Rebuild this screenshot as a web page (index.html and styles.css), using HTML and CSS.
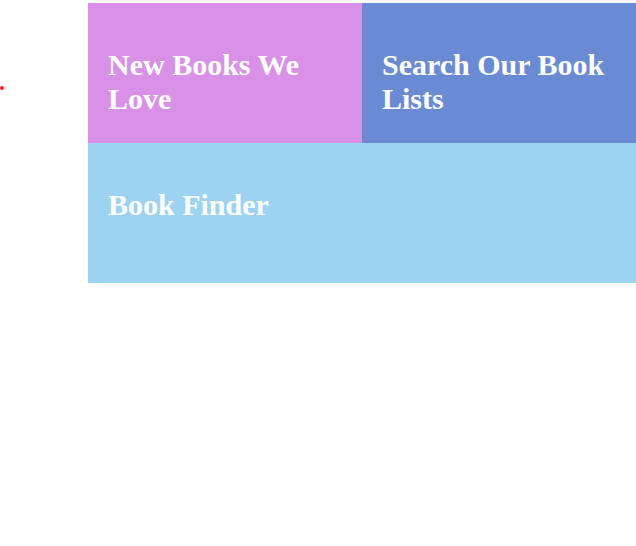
FILE: index.html
```html
<!DOCTYPE html>
<html>
<head>
<meta charset="utf-8">
<link rel="stylesheet" href="styles.css">
</head>
<body>
<div class="page">
  <span class="dot"></span>
  <div class="tiles">
    <a class="tile tile-pink" href="#"><h2>New Books We Love</h2></a>
    <a class="tile tile-blue" href="#"><h2>Search Our Book Lists</h2></a>
    <a class="tile tile-sky tile-wide" href="#"><h2>Book Finder</h2></a>
  </div>
</div>
</body>
</html>
```
FILE: styles.css
```css
html, body {
  margin: 0;
  padding: 0;
  background: #fff;
}
.page {
  position: relative;
  padding: 3px 0 0 88px;
}
.dot {
  position: absolute;
  left: 0;
  top: 86px;
  width: 4px;
  height: 4px;
  border-radius: 50%;
  background: #f01c24;
}
.tiles {
  display: grid;
  grid-template-columns: 1fr 1fr;
  grid-auto-rows: 140px;
}
.tile {
  display: block;
  padding: 0 20px;
  text-decoration: none;
  color: #fff;
  box-sizing: border-box;
}
.tile h2 {
  margin: 45px 0 0;
  font-family: "Liberation Serif", "Times New Roman", serif;
  font-weight: bold;
  font-size: 30px;
  line-height: 34px;
}
.tile-wide { grid-column: 1 / -1; }
.tile-pink { background: #d990e7; }
.tile-blue { background: #6a8bd3; }
.tile-sky { background: #9dd3f1; }
```
